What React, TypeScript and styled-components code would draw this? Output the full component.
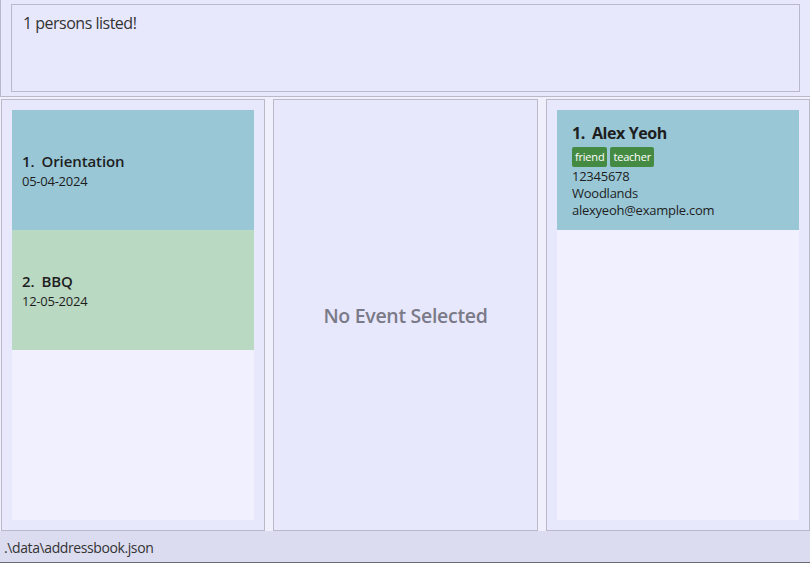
import styled, { createGlobalStyle } from "styled-components";

type EventItem = {
  name: string;
  date: string;
  color: string;
};

type Person = {
  name: string;
  tags: string[];
  phone: string;
  address: string;
  email: string;
};

const events: EventItem[] = [
  { name: "Orientation", date: "05-04-2024", color: "#99c7d6" },
  { name: "BBQ", date: "12-05-2024", color: "#bad9c2" },
];

const persons: Person[] = [
  {
    name: "Alex Yeoh",
    tags: ["friend", "teacher"],
    phone: "12345678",
    address: "Woodlands",
    email: "alexyeoh@example.com",
  },
];

const GlobalStyle = createGlobalStyle`
  html, body {
    margin: 0;
    padding: 0;
    background: #f0f0fc;
  }
  body {
    font-family: "Open Sans", "Noto Sans", sans-serif;
    color: #222;
  }
`;

const Window = styled.div`
  width: 810px;
  height: 563px;
  display: flex;
  flex-direction: column;
  background: #f0f0fc;
  overflow: hidden;
`;

const ResultSection = styled.div`
  height: 97px;
  box-sizing: border-box;
  padding: 4px 10px 4px 10px;
  background: #e8e8fd;
  border-left: 1px solid #b9b9c9;
  border-bottom: 1px solid #b9b9c9;
  flex: none;
`;

const ResultBox = styled.div`
  height: 88px;
  box-sizing: border-box;
  border: 1px solid #b9b9c9;
  background: #e8e8fd;
  padding: 7px 11px;
  font-size: 16px;
  color: #333;
  letter-spacing: -0.5px;
`;

const Main = styled.div`
  flex: 1;
  display: flex;
  gap: 8px;
  padding: 2px 0 0 1px;
  min-height: 0;
`;

const Panel = styled.div<{ $w: number }>`
  width: ${({ $w }) => $w}px;
  flex: none;
  box-sizing: border-box;
  height: 432px;
  border: 1px solid #b9b9c9;
  background: #e8e8fd;
  padding: 10px;
  display: flex;
  flex-direction: column;
`;

const ListArea = styled.div`
  flex: 1;
  background: #f0f0fe;
  display: flex;
  flex-direction: column;
`;

const EventCard = styled.div<{ $bg: string }>`
  height: 120px;
  background: ${({ $bg }) => $bg};
  padding: 0 10px;
  display: flex;
  flex-direction: column;
  justify-content: center;
  box-sizing: border-box;
`;

const CardTitle = styled.div`
  font-size: 15px;
  font-weight: 600;
  color: #1e1e1e;
  letter-spacing: -0.1px;
  line-height: 20px;
  margin-top: 1px;
  margin-bottom: 2px;
`;

const Index = styled.span`
  margin-right: 7px;
`;

const SmallText = styled.div`
  font-size: 13px;
  color: #1e1e1e;
  line-height: 17px;
  letter-spacing: -0.25px;
`;

const EmptyState = styled.div`
  flex: 1;
  display: flex;
  align-items: center;
  justify-content: center;
  font-size: 19.5px;
  font-weight: 600;
  color: #7a7a88;
  letter-spacing: -0.3px;
  padding-top: 1px;
`;

const PersonCard = styled.div`
  height: 120px;
  background: #99c7d6;
  padding: 12px 15px 0;
  box-sizing: border-box;
`;

const PersonName = styled.div`
  font-size: 16px;
  font-weight: 700;
  color: #1e1e1e;
  line-height: 22px;
  letter-spacing: -0.4px;
`;

const Tags = styled.div`
  display: flex;
  gap: 3px;
  margin: 3px 0 1px;
`;

const Tag = styled.span`
  background: #458a42;
  color: #fff;
  font-size: 11px;
  line-height: 20px;
  padding: 0 3px;
  border-radius: 2px;
  letter-spacing: -0.2px;
`;

const StatusBar = styled.div`
  flex: none;
  height: 32px;
  box-sizing: border-box;
  background: #dcdcf0;
  border-bottom: 1px solid #6a6a72;
  padding: 7px 4px 0;
  font-size: 14px;
  color: #333;
  letter-spacing: -0.4px;
`;

export default function App() {
  return (
    <Window>
      <GlobalStyle />
      <ResultSection>
        <ResultBox>1 persons listed!</ResultBox>
      </ResultSection>
      <Main>
        <Panel $w={264}>
          <ListArea>
            {events.map((ev, i) => (
              <EventCard key={ev.name} $bg={ev.color}>
                <CardTitle>
                  <Index>{i + 1}.</Index>
                  {ev.name}
                </CardTitle>
                <SmallText>{ev.date}</SmallText>
              </EventCard>
            ))}
          </ListArea>
        </Panel>
        <Panel $w={265}>
          <EmptyState>No Event Selected</EmptyState>
        </Panel>
        <Panel $w={264}>
          <ListArea>
            {persons.map((p, i) => (
              <PersonCard key={p.name}>
                <PersonName>
                  <Index>{i + 1}.</Index>
                  {p.name}
                </PersonName>
                <Tags>
                  {p.tags.map((t) => (
                    <Tag key={t}>{t}</Tag>
                  ))}
                </Tags>
                <SmallText>{p.phone}</SmallText>
                <SmallText>{p.address}</SmallText>
                <SmallText>{p.email}</SmallText>
              </PersonCard>
            ))}
          </ListArea>
        </Panel>
      </Main>
      <StatusBar>.\data\addressbook.json</StatusBar>
    </Window>
  );
}
